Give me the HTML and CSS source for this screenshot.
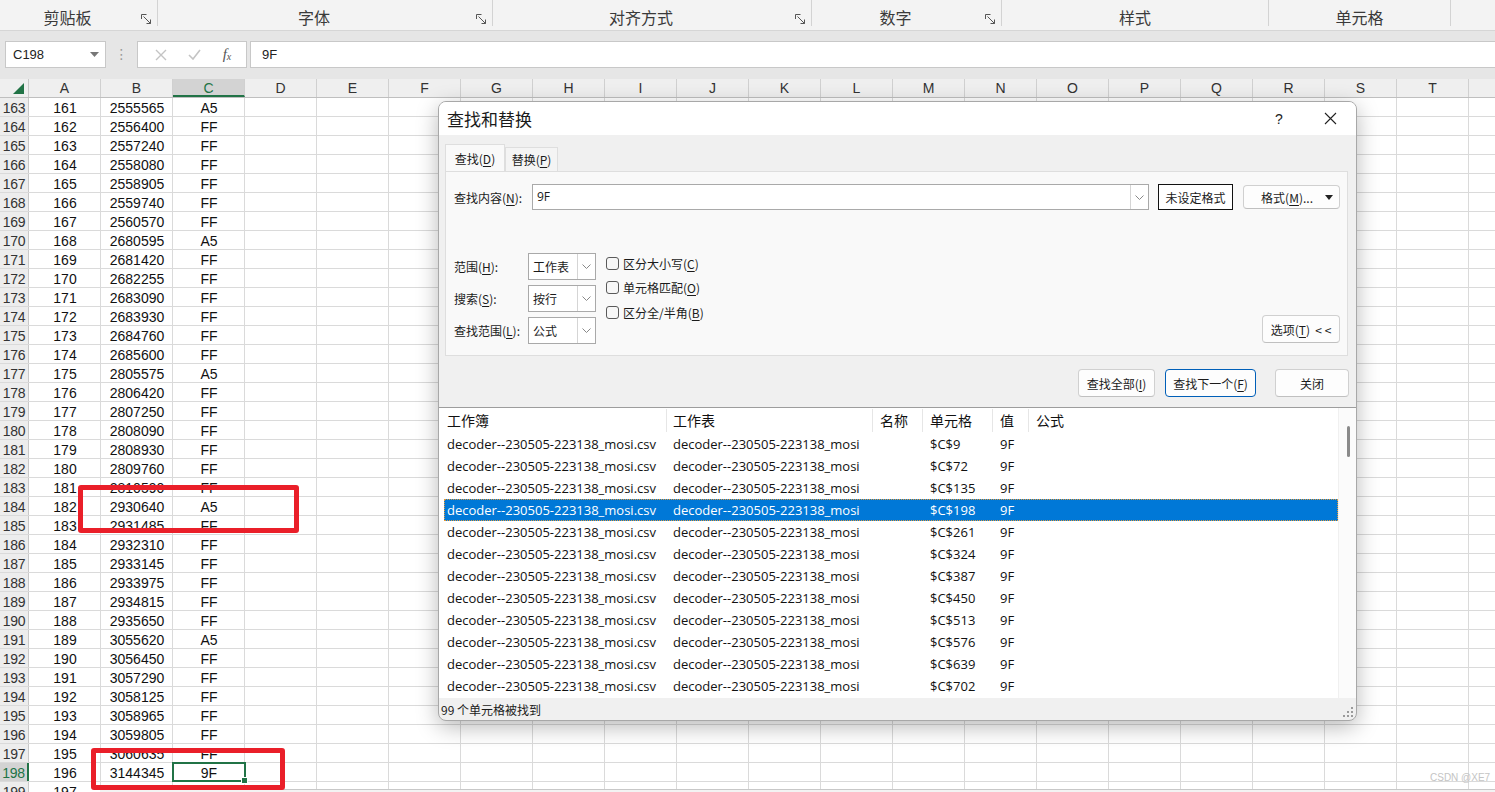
FILE: index.html
```html
<!DOCTYPE html>
<html lang="zh-CN">
<head>
<meta charset="utf-8">
<title>查找和替换</title>
<link rel="stylesheet" href="styles.css">
</head>
<body>
<div class="ribbon">
  <div class="grp g1"><span class="glabel">剪贴板</span><svg class="launch" width="11" height="10" viewBox="0 0 11 10"><path d="M0.5 5 V0.5 H5.5 M2.5 2.5 L9.5 9.5 M9.5 5.5 V9.5 H5.5" fill="none" stroke="#555" stroke-width="1"/></svg></div>
  <div class="grp g2"><span class="glabel">字体</span><svg class="launch" width="11" height="10" viewBox="0 0 11 10"><path d="M0.5 5 V0.5 H5.5 M2.5 2.5 L9.5 9.5 M9.5 5.5 V9.5 H5.5" fill="none" stroke="#555" stroke-width="1"/></svg></div>
  <div class="grp g3"><span class="glabel">对齐方式</span><svg class="launch" width="11" height="10" viewBox="0 0 11 10"><path d="M0.5 5 V0.5 H5.5 M2.5 2.5 L9.5 9.5 M9.5 5.5 V9.5 H5.5" fill="none" stroke="#555" stroke-width="1"/></svg></div>
  <div class="grp g4"><span class="glabel">数字</span><svg class="launch" width="11" height="10" viewBox="0 0 11 10"><path d="M0.5 5 V0.5 H5.5 M2.5 2.5 L9.5 9.5 M9.5 5.5 V9.5 H5.5" fill="none" stroke="#555" stroke-width="1"/></svg></div>
  <div class="grp g5"><span class="glabel">样式</span></div>
  <div class="grp g6"><span class="glabel">单元格</span></div>
  <div class="grp g7"></div>
</div>

<div class="fbar">
  <div class="namebox"><span>C198</span><svg width="9" height="5" viewBox="0 0 9 5"><path d="M0 0 H9 L4.5 5 Z" fill="#777"/></svg></div>
  <div class="fdots">⋮</div>
  <div class="fbtns">
    <svg width="12" height="12" viewBox="0 0 12 12"><path d="M1 1 L11 11 M11 1 L1 11" stroke="#c4c4c4" stroke-width="1.4"/></svg>
    <svg width="13" height="11" viewBox="0 0 13 11"><path d="M1 6 L5 10 L12 1" fill="none" stroke="#c4c4c4" stroke-width="1.6"/></svg>
    <span class="fx">f<sub>x</sub></span>
  </div>
  <div class="finput">9F</div>
</div>

<div class="sheet">
  <div class="colhdr">
    <div class="corner"><svg width="11" height="11" viewBox="0 0 11 11"><path d="M11 0 V11 H0 Z" fill="#217346"/></svg></div>
    <div class="ch">A</div><div class="ch">B</div><div class="ch sel">C</div><div class="ch">D</div><div class="ch">E</div><div class="ch">F</div><div class="ch">G</div><div class="ch">H</div><div class="ch">I</div><div class="ch">J</div><div class="ch">K</div><div class="ch">L</div><div class="ch">M</div><div class="ch">N</div><div class="ch">O</div><div class="ch">P</div><div class="ch">Q</div><div class="ch">R</div><div class="ch">S</div><div class="ch">T</div><div class="ch last"></div>
  </div>
  <div class="rows">
    <div class="row"><div class="rh">163</div><div class="c">161</div><div class="c">2555565</div><div class="c">A5</div></div>
    <div class="row"><div class="rh">164</div><div class="c">162</div><div class="c">2556400</div><div class="c">FF</div></div>
    <div class="row"><div class="rh">165</div><div class="c">163</div><div class="c">2557240</div><div class="c">FF</div></div>
    <div class="row"><div class="rh">166</div><div class="c">164</div><div class="c">2558080</div><div class="c">FF</div></div>
    <div class="row"><div class="rh">167</div><div class="c">165</div><div class="c">2558905</div><div class="c">FF</div></div>
    <div class="row"><div class="rh">168</div><div class="c">166</div><div class="c">2559740</div><div class="c">FF</div></div>
    <div class="row"><div class="rh">169</div><div class="c">167</div><div class="c">2560570</div><div class="c">FF</div></div>
    <div class="row"><div class="rh">170</div><div class="c">168</div><div class="c">2680595</div><div class="c">A5</div></div>
    <div class="row"><div class="rh">171</div><div class="c">169</div><div class="c">2681420</div><div class="c">FF</div></div>
    <div class="row"><div class="rh">172</div><div class="c">170</div><div class="c">2682255</div><div class="c">FF</div></div>
    <div class="row"><div class="rh">173</div><div class="c">171</div><div class="c">2683090</div><div class="c">FF</div></div>
    <div class="row"><div class="rh">174</div><div class="c">172</div><div class="c">2683930</div><div class="c">FF</div></div>
    <div class="row"><div class="rh">175</div><div class="c">173</div><div class="c">2684760</div><div class="c">FF</div></div>
    <div class="row"><div class="rh">176</div><div class="c">174</div><div class="c">2685600</div><div class="c">FF</div></div>
    <div class="row"><div class="rh">177</div><div class="c">175</div><div class="c">2805575</div><div class="c">A5</div></div>
    <div class="row"><div class="rh">178</div><div class="c">176</div><div class="c">2806420</div><div class="c">FF</div></div>
    <div class="row"><div class="rh">179</div><div class="c">177</div><div class="c">2807250</div><div class="c">FF</div></div>
    <div class="row"><div class="rh">180</div><div class="c">178</div><div class="c">2808090</div><div class="c">FF</div></div>
    <div class="row"><div class="rh">181</div><div class="c">179</div><div class="c">2808930</div><div class="c">FF</div></div>
    <div class="row"><div class="rh">182</div><div class="c">180</div><div class="c">2809760</div><div class="c">FF</div></div>
    <div class="row"><div class="rh">183</div><div class="c">181</div><div class="c">2810590</div><div class="c">FF</div></div>
    <div class="row"><div class="rh">184</div><div class="c">182</div><div class="c">2930640</div><div class="c">A5</div></div>
    <div class="row"><div class="rh">185</div><div class="c">183</div><div class="c">2931485</div><div class="c">FF</div></div>
    <div class="row"><div class="rh">186</div><div class="c">184</div><div class="c">2932310</div><div class="c">FF</div></div>
    <div class="row"><div class="rh">187</div><div class="c">185</div><div class="c">2933145</div><div class="c">FF</div></div>
    <div class="row"><div class="rh">188</div><div class="c">186</div><div class="c">2933975</div><div class="c">FF</div></div>
    <div class="row"><div class="rh">189</div><div class="c">187</div><div class="c">2934815</div><div class="c">FF</div></div>
    <div class="row"><div class="rh">190</div><div class="c">188</div><div class="c">2935650</div><div class="c">FF</div></div>
    <div class="row"><div class="rh">191</div><div class="c">189</div><div class="c">3055620</div><div class="c">A5</div></div>
    <div class="row"><div class="rh">192</div><div class="c">190</div><div class="c">3056450</div><div class="c">FF</div></div>
    <div class="row"><div class="rh">193</div><div class="c">191</div><div class="c">3057290</div><div class="c">FF</div></div>
    <div class="row"><div class="rh">194</div><div class="c">192</div><div class="c">3058125</div><div class="c">FF</div></div>
    <div class="row"><div class="rh">195</div><div class="c">193</div><div class="c">3058965</div><div class="c">FF</div></div>
    <div class="row"><div class="rh">196</div><div class="c">194</div><div class="c">3059805</div><div class="c">FF</div></div>
    <div class="row"><div class="rh">197</div><div class="c">195</div><div class="c">3060635</div><div class="c">FF</div></div>
    <div class="row"><div class="rh sel">198</div><div class="c">196</div><div class="c">3144345</div><div class="c csel">9F</div></div>
    <div class="row"><div class="rh">199</div><div class="c">197</div><div class="c"></div><div class="c"></div></div>
  </div>
</div>

<div class="hscroll"></div>

<div class="mark m1"></div>
<div class="mark m2"></div>

<div class="dlg">
  <div class="dlg-title">
    <span class="dt">查找和替换</span>
    <span class="help">?</span>
    <span class="close"><svg width="13" height="13" viewBox="0 0 13 13"><path d="M1 1 L12 12 M12 1 L1 12" stroke="#222" stroke-width="1.1"/></svg></span>
  </div>
  <div class="dlg-body">
    <div class="tabs">
      <div class="tab on"><span>查找(<u>D</u>)</span></div>
      <div class="tab"><span>替换(<u>P</u>)</span></div>
    </div>
    <div class="panel">
      <div class="find-row">
        <span class="flabel">查找内容(<u>N</u>):</span>
        <div class="combo wide"><span class="val">9F</span><span class="drop"><svg width="9" height="5" viewBox="0 0 9 5"><path d="M0.5 0.5 L4.5 4.5 L8.5 0.5" fill="none" stroke="#888"/></svg></span></div>
        <div class="noformat"><span>未设定格式</span></div>
        <div class="btn fmt"><span>格式(<u>M</u>)...</span><svg width="8" height="5" viewBox="0 0 8 5"><path d="M0 0 H8 L4 5 Z" fill="#222"/></svg></div>
      </div>
      <div class="opts">
        <div class="selgrid">
          <span class="olabel">范围(<u>H</u>):</span>
          <div class="combo sm"><span class="val">工作表</span><span class="drop"><svg width="9" height="5" viewBox="0 0 9 5"><path d="M0.5 0.5 L4.5 4.5 L8.5 0.5" fill="none" stroke="#888"/></svg></span></div>
          <span class="olabel">搜索(<u>S</u>):</span>
          <div class="combo sm"><span class="val">按行</span><span class="drop"><svg width="9" height="5" viewBox="0 0 9 5"><path d="M0.5 0.5 L4.5 4.5 L8.5 0.5" fill="none" stroke="#888"/></svg></span></div>
          <span class="olabel">查找范围(<u>L</u>):</span>
          <div class="combo sm"><span class="val">公式</span><span class="drop"><svg width="9" height="5" viewBox="0 0 9 5"><path d="M0.5 0.5 L4.5 4.5 L8.5 0.5" fill="none" stroke="#888"/></svg></span></div>
        </div>
        <div class="checks">
          <label class="chk"><span class="cb"></span><span>区分大小写(<u>C</u>)</span></label>
          <label class="chk"><span class="cb"></span><span>单元格匹配(<u>O</u>)</span></label>
          <label class="chk"><span class="cb"></span><span>区分全/半角(<u>B</u>)</span></label>
        </div>
        <div class="btn optbtn"><span>选项(<u>T</u>)&nbsp;&nbsp;&lt; &lt;</span></div>
      </div>
    </div>
    <div class="actions">
      <div class="btn a1"><span>查找全部(<u>I</u>)</span></div>
      <div class="btn a2 primary"><span>查找下一个(<u>F</u>)</span></div>
      <div class="btn a3"><span>关闭</span></div>
    </div>
  </div>
  <div class="list">
    <div class="table">
      <div class="lrow lhead"><span class="w1">工作簿</span><span class="w2">工作表</span><span class="w3">名称</span><span class="w4">单元格</span><span class="w5">值</span><span class="w6">公式</span></div>
      <div class="lrow"><span class="w1">decoder--230505-223138_mosi.csv</span><span class="w2">decoder--230505-223138_mosi</span><span class="w3"></span><span class="w4">$C$9</span><span class="w5">9F</span><span class="w6"></span></div>
      <div class="lrow"><span class="w1">decoder--230505-223138_mosi.csv</span><span class="w2">decoder--230505-223138_mosi</span><span class="w3"></span><span class="w4">$C$72</span><span class="w5">9F</span><span class="w6"></span></div>
      <div class="lrow"><span class="w1">decoder--230505-223138_mosi.csv</span><span class="w2">decoder--230505-223138_mosi</span><span class="w3"></span><span class="w4">$C$135</span><span class="w5">9F</span><span class="w6"></span></div>
      <div class="lrow lsel"><span class="w1">decoder--230505-223138_mosi.csv</span><span class="w2">decoder--230505-223138_mosi</span><span class="w3"></span><span class="w4">$C$198</span><span class="w5">9F</span><span class="w6"></span></div>
      <div class="lrow"><span class="w1">decoder--230505-223138_mosi.csv</span><span class="w2">decoder--230505-223138_mosi</span><span class="w3"></span><span class="w4">$C$261</span><span class="w5">9F</span><span class="w6"></span></div>
      <div class="lrow"><span class="w1">decoder--230505-223138_mosi.csv</span><span class="w2">decoder--230505-223138_mosi</span><span class="w3"></span><span class="w4">$C$324</span><span class="w5">9F</span><span class="w6"></span></div>
      <div class="lrow"><span class="w1">decoder--230505-223138_mosi.csv</span><span class="w2">decoder--230505-223138_mosi</span><span class="w3"></span><span class="w4">$C$387</span><span class="w5">9F</span><span class="w6"></span></div>
      <div class="lrow"><span class="w1">decoder--230505-223138_mosi.csv</span><span class="w2">decoder--230505-223138_mosi</span><span class="w3"></span><span class="w4">$C$450</span><span class="w5">9F</span><span class="w6"></span></div>
      <div class="lrow"><span class="w1">decoder--230505-223138_mosi.csv</span><span class="w2">decoder--230505-223138_mosi</span><span class="w3"></span><span class="w4">$C$513</span><span class="w5">9F</span><span class="w6"></span></div>
      <div class="lrow"><span class="w1">decoder--230505-223138_mosi.csv</span><span class="w2">decoder--230505-223138_mosi</span><span class="w3"></span><span class="w4">$C$576</span><span class="w5">9F</span><span class="w6"></span></div>
      <div class="lrow"><span class="w1">decoder--230505-223138_mosi.csv</span><span class="w2">decoder--230505-223138_mosi</span><span class="w3"></span><span class="w4">$C$639</span><span class="w5">9F</span><span class="w6"></span></div>
      <div class="lrow"><span class="w1">decoder--230505-223138_mosi.csv</span><span class="w2">decoder--230505-223138_mosi</span><span class="w3"></span><span class="w4">$C$702</span><span class="w5">9F</span><span class="w6"></span></div>
    </div>
    <div class="vscroll"><div class="thumb"></div></div>
  </div>
  <div class="status">
    <span>99 个单元格被找到</span>
    <svg class="grip" width="10" height="10" viewBox="0 0 10 10"><g fill="#9a9a9a"><rect x="8" y="0" width="2" height="2"/><rect x="4" y="4" width="2" height="2"/><rect x="8" y="4" width="2" height="2"/><rect x="0" y="8" width="2" height="2"/><rect x="4" y="8" width="2" height="2"/><rect x="8" y="8" width="2" height="2"/></g></svg>
  </div>
</div>

<div class="watermark">CSDN @XE7</div>
</body>
</html>
```

FILE: styles.css
```css
* { box-sizing: border-box; }
html, body { margin: 0; padding: 0; }
body {
  width: 1495px;
  height: 792px;
  overflow: hidden;
  position: relative;
  background: #fff;
  font-family: "Noto Sans CJK SC", sans-serif;
}

/* ribbon */
.ribbon {
  display: flex;
  height: 31px;
  background: #f3f3f3;
  border-bottom: 1px solid #d6d6d6;
}
.grp {
  display: flex;
  align-items: flex-start;
  height: 26px;
  border-right: 1px solid #d3d3d3;
}
.glabel {
  flex: 1;
  text-align: center;
  font-size: 16px;
  line-height: 20px;
  padding-top: 7px;
  color: #3a3a3a;
}
.launch { margin: 14px 5px 0 6px; }
.g1 { width: 158px; }
.g2 { width: 335px; }
.g3 { width: 319px; }
.g4 { width: 190px; }
.g5 { width: 267px; }
.g6 { width: 182px; }
.g7 { flex: 1; border-right: none; }

/* formula bar */
.fbar {
  display: flex;
  height: 48px;
  padding: 10px 0 11px 5px;
  background: #e6e6e6;
}
.namebox {
  width: 101px;
  background: #fff;
  border: 1px solid #c8c8c8;
  display: flex;
  align-items: center;
  justify-content: space-between;
  padding: 0 6px 0 7px;
  font: 13px "Liberation Sans", sans-serif;
  color: #222;
}
.fdots {
  width: 31px;
  text-align: center;
  color: #9a9a9a;
  font: 14px/27px "DejaVu Sans", sans-serif;
}
.fbtns {
  width: 110px;
  background: #fff;
  border: 1px solid #c8c8c8;
  display: flex;
  align-items: center;
  justify-content: space-around;
  padding: 0 4px 0 6px;
}
.fx {
  font: italic 15px "Liberation Serif", serif;
  color: #555;
}
.fx sub { font-size: 10px; vertical-align: -1px; }
.finput {
  flex: 1;
  margin-left: 3px;
  background: #fff;
  border: 1px solid #c8c8c8;
  border-right: none;
  padding-left: 11px;
  font: 13px/25px "Liberation Sans", sans-serif;
  color: #222;
}

/* sheet */
.colhdr {
  display: flex;
  height: 19px;
  background: #efefef;
  border-bottom: 1px solid #bfbfbf;
}
.corner {
  width: 29px;
  border-right: 1px solid #c8c8c8;
  display: flex;
  align-items: flex-end;
  justify-content: flex-end;
  padding: 0 4px 3px 0;
}
.ch {
  width: 72px;
  border-right: 1px solid #d0d0d0;
  text-align: center;
  font: 14px/19px "Liberation Sans", sans-serif;
  color: #333;
}
.ch.sel {
  background: #d3d3d3;
  border-bottom: 2px solid #217346;
  color: #217346;
}
.ch.last { flex: 1; border-right: none; }
.rows {
  background-image: repeating-linear-gradient(to right, transparent 0 71px, #dadada 71px 72px);
  background-position: 29px 0;
}
.row {
  display: flex;
  height: 19px;
  border-bottom: 1px solid #dadada;
  font: 14px/20px "Liberation Sans", sans-serif;
  color: #111;
}
.rh {
  width: 29px;
  background: #ededed;
  border-right: 1px solid #c8c8c8;
  text-align: center;
  color: #333;
  letter-spacing: -0.3px;
}
.rh.sel {
  background: #d3d3d3;
  color: #217346;
  border-right: 2px solid #217346;
}
.c { width: 72px; text-align: center; }
.csel {
  position: relative;
  outline: 2px solid #217346;
  outline-offset: -1px;
}
.csel::after {
  content: "";
  position: absolute;
  right: -3px;
  bottom: -3px;
  width: 5px;
  height: 5px;
  background: #217346;
  border: 1px solid #fff;
}
.hscroll {
  position: absolute;
  left: 100px;
  right: 0;
  top: 789px;
  height: 4px;
  background: #f3f3f3;
  border-top: 1px solid #c8c8c8;
}

/* red marks */
.mark {
  position: absolute;
  border: 5px solid #ea1f29;
  border-radius: 3px;
}
.m1 { left: 78px; top: 485px; width: 221px; height: 48px; }
.m2 { left: 91px; top: 748px; width: 194px; height: 42px; }

/* dialog */
.dlg {
  position: absolute;
  left: 438px;
  top: 101px;
  width: 919px;
  height: 620px;
  background: #f0f0f0;
  border: 1px solid #a8a8a8;
  border-radius: 8px;
  box-shadow: 0 6px 22px rgba(0, 0, 0, 0.28);
  overflow: hidden;
  display: flex;
  flex-direction: column;
  font-size: 12px;
  color: #1b1b1b;
}
.dlg u { text-underline-offset: 2px; }
.dlg-title {
  height: 33px;
  flex: none;
  background: #fff;
  display: flex;
  align-items: center;
  padding-left: 8px;
  padding-right: 3px;
}
.dt { flex: 1; font-size: 17px; color: #1a1a1a; }
.help {
  width: 46px;
  text-align: center;
  font: 14px "Liberation Sans", sans-serif;
  color: #222;
}
.close {
  width: 46px;
  display: flex;
  justify-content: center;
  margin-left: 5px;
}
.dlg-body { flex: none; padding: 9px 8px 0 6px; }
.tabs { display: flex; align-items: flex-end; height: 27px; }
.tab {
  height: 24px;
  width: 53px;
  border: 1px solid #dedede;
  border-bottom: none;
  background: #f4f4f4;
  display: flex;
  align-items: center;
  justify-content: center;
}
.tab.on { height: 27px; width: 60px; background: #f9f9f9; }
.panel {
  height: 185px;
  background: #f9f9f9;
  border: 1px solid #dedede;
  padding: 12px 7px 0 8px;
  display: flex;
  flex-direction: column;
}
.find-row { display: flex; align-items: center; height: 26px; }
.flabel { width: 78px; }
.combo {
  display: flex;
  background: #fff;
  border: 1px solid #a9a9a9;
}
.combo .val { flex: 1; padding-left: 4px; line-height: 24px; }
.combo .drop {
  width: 18px;
  border-left: 1px solid #d5d5d5;
  display: flex;
  align-items: center;
  justify-content: center;
}
.combo.wide { width: 617px; height: 26px; }
.combo.wide .val { font-family: "Open Sans", "Noto Sans CJK SC", sans-serif; }
.noformat {
  margin-left: 9px;
  width: 75px;
  height: 26px;
  border: 1.5px solid #111;
  background: #fff;
  display: flex;
  align-items: center;
  justify-content: center;
}
.btn {
  background: #fdfdfd;
  border: 1px solid #d0d0d0;
  border-bottom-color: #c0c0c0;
  border-radius: 4px;
  display: flex;
  align-items: center;
  justify-content: center;
  height: 28px;
  white-space: nowrap;
}
.fmt {
  margin-left: 10px;
  width: 97px;
  height: 24px;
  justify-content: flex-end;
  gap: 12px;
  padding-right: 6px;
}
.opts {
  display: flex;
  margin-top: 43px;
  height: 91px;
}
.selgrid {
  display: grid;
  grid-template-columns: 74px 68px;
  grid-auto-rows: 27px;
  row-gap: 5px;
  align-items: center;
}
.combo.sm { height: 27px; }
.combo.sm .val { line-height: 25px; }
.checks {
  margin-left: 10px;
  margin-top: -2px;
  display: flex;
  flex-direction: column;
}
.chk {
  height: 24.5px;
  display: flex;
  align-items: center;
  gap: 4px;
}
.cb {
  width: 13px;
  height: 13px;
  border: 1px solid #5a5a5a;
  border-radius: 3px;
  background: #f7f7f7;
}
.optbtn {
  margin-left: auto;
  align-self: flex-end;
  margin-bottom: 1px;
  width: 78px;
}
.actions {
  display: flex;
  justify-content: flex-end;
  margin-top: 13px;
  margin-right: -1px;
}
.a1 { width: 77px; }
.a2 { width: 91px; margin-left: 10px; }
.a3 { width: 74px; margin-left: 19px; }
.primary { border: 1px solid #005fb8; }

.list {
  margin-top: 10px;
  height: 291px;
  flex: none;
  background: #fff;
  border-top: 1px solid #9d9d9d;
  display: flex;
}
.table { flex: 1; padding-left: 5px; }
.lrow {
  display: flex;
  height: 22px;
  align-items: center;
  font: 13px "Open Sans", "Noto Sans CJK SC", sans-serif;
  color: #111;
  white-space: nowrap;
}
.lrow span { padding-left: 7px; overflow: hidden; }
.lhead {
  height: 25px;
  font: 14px "Noto Sans CJK SC", sans-serif;
}
.lhead span { border-right: 1px solid #e6e6e6; line-height: 23px; }
.w1 { width: 223px; padding-left: 3px !important; }
.w2 { width: 206px; padding-left: 6px !important; }
.w3 { width: 50px; }
.w4 { width: 70px; }
.w5 { width: 36px; }
.w6 { flex: 1; border-right: none !important; }
.lsel {
  background: #0078d7;
  color: #fff;
  outline: 1px dotted #e39a3c;
  outline-offset: -1px;
}
.vscroll {
  width: 18px;
  background: #fbfbfb;
  border-left: 1px solid #f0f0f0;
  padding-top: 18px;
}
.thumb {
  width: 3px;
  height: 31px;
  margin-left: 8px;
  border-radius: 2px;
  background: #8a8a8a;
}
.status {
  flex: none;
  height: 22px;
  display: flex;
  align-items: center;
  justify-content: space-between;
  padding: 0 3px 0 2px;
  font-size: 12px;
  color: #1b1b1b;
}
.grip { align-self: flex-end; margin-bottom: 3px; }

.watermark {
  position: absolute;
  left: 1430px;
  top: 772px;
  font: 10px "Liberation Sans", sans-serif;
  color: #c4c4c4;
}
```
